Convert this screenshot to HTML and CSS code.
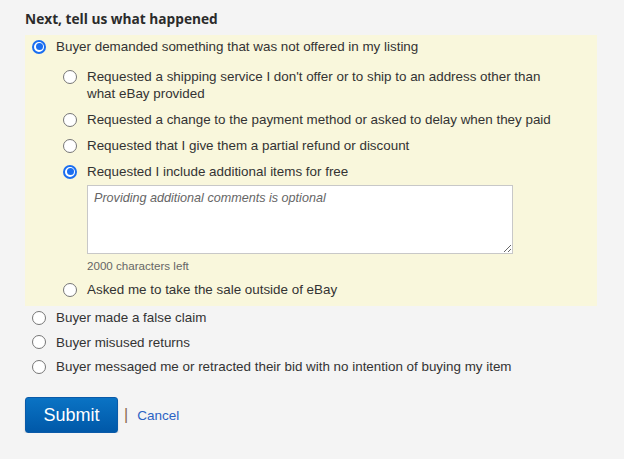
FILE: index.html
```html
<!DOCTYPE html>
<html>
<head>
<meta charset="utf-8">
<link rel="stylesheet" href="styles.css">
</head>
<body>
<div class="page">
  <h2 class="title">Next, tell us what happened</h2>
  <div class="selected-group">
    <div class="option">
      <span class="radio checked"></span>
      <span class="label">Buyer demanded something that was not offered in my listing</span>
    </div>
    <div class="sub-options">
      <div class="option">
        <span class="radio"></span>
        <span class="label wrap">Requested a shipping service I don't offer or to ship to an address other than what eBay provided</span>
      </div>
      <div class="option">
        <span class="radio"></span>
        <span class="label">Requested a change to the payment method or asked to delay when they paid</span>
      </div>
      <div class="option">
        <span class="radio"></span>
        <span class="label">Requested that I give them a partial refund or discount</span>
      </div>
      <div class="option">
        <span class="radio checked"></span>
        <span class="label">Requested I include additional items for free</span>
      </div>
      <div class="comment">
        <textarea class="comment-box" placeholder="Providing additional comments is optional"></textarea>
        <div class="counter">2000 characters left</div>
      </div>
      <div class="option">
        <span class="radio"></span>
        <span class="label">Asked me to take the sale outside of eBay</span>
      </div>
    </div>
  </div>
  <div class="other-options">
    <div class="option">
      <span class="radio"></span>
      <span class="label">Buyer made a false claim</span>
    </div>
    <div class="option">
      <span class="radio"></span>
      <span class="label">Buyer misused returns</span>
    </div>
    <div class="option">
      <span class="radio"></span>
      <span class="label">Buyer messaged me or retracted their bid with no intention of buying my item</span>
    </div>
  </div>
  <div class="actions">
    <button class="submit">Submit</button>
    <span class="sep">|</span>
    <a class="cancel" href="#">Cancel</a>
  </div>
</div>
</body>
</html>
```
FILE: styles.css
```css
html, body {
  margin: 0;
  padding: 0;
}
body {
  background: #f4f4f4;
  font-family: "Liberation Sans", Arial, sans-serif;
  color: #333;
}
.page {
  padding: 9px 0 0 25px;
}
.title {
  margin: 0 0 7px 0;
  font-family: "Open Sans", "DejaVu Sans", sans-serif;
  font-size: 13.7px;
  font-weight: 700;
  line-height: 19px;
  color: #2b2b2b;
}
.selected-group {
  width: 572px;
  background: #f9f7dc;
  padding: 3px 0 8px 7px;
  box-sizing: border-box;
}
.option {
  display: flex;
  align-items: flex-start;
  gap: 10px;
  font-size: 13.4px;
  line-height: 17px;
  color: #333;
}
.radio {
  flex: none;
  width: 14px;
  height: 14px;
  margin-top: 1.5px;
  box-sizing: border-box;
  border: 1px solid #767676;
  border-radius: 50%;
  background: #fff;
  position: relative;
}
.radio.checked {
  border: 2px solid #1a6ef0;
}
.radio.checked::after {
  content: "";
  position: absolute;
  left: 1.5px;
  top: 1.5px;
  width: 7px;
  height: 7px;
  border-radius: 50%;
  background: #1a6ef0;
}
.label.wrap {
  max-width: 470px;
}
.sub-options {
  padding-left: 31px;
  margin-top: 13px;
  display: flex;
  flex-direction: column;
  gap: 9px;
}
.comment {
  padding-left: 24px;
  margin-top: -4px;
  margin-bottom: -2px;
}
.comment-box {
  display: block;
  width: 426px;
  height: 69px;
  box-sizing: border-box;
  border: 1px solid #c8c8c8;
  background: #fff;
  padding: 4px 6px;
  font-family: "Liberation Sans", Arial, sans-serif;
  font-size: 12.6px;
  line-height: 16px;
  resize: vertical;
  margin: 0;
}
.comment-box::placeholder {
  color: #666;
  font-style: italic;
}
.counter {
  font-size: 11.6px;
  line-height: 16px;
  color: #666;
  margin-top: 4px;
}
.other-options {
  padding: 3px 0 0 7px;
  display: flex;
  flex-direction: column;
  gap: 7.5px;
}
.actions {
  margin-top: 22px;
  display: flex;
  align-items: center;
}
.submit {
  width: 93px;
  height: 36px;
  border: 1px solid #0a5aa8;
  border-radius: 3px;
  background: linear-gradient(#0a73c4, #0058a8);
  color: #fff;
  font-family: "Liberation Sans", Arial, sans-serif;
  font-size: 18px;
  padding: 0;
  box-shadow: 0 3px 2px rgba(0, 0, 0, 0.15);
}
.sep {
  margin-left: 6px;
  color: #8a6b4f;
  font-size: 16px;
}
.cancel {
  margin-left: 9px;
  color: #2b63c4;
  font-size: 13.5px;
  text-decoration: none;
}
```
